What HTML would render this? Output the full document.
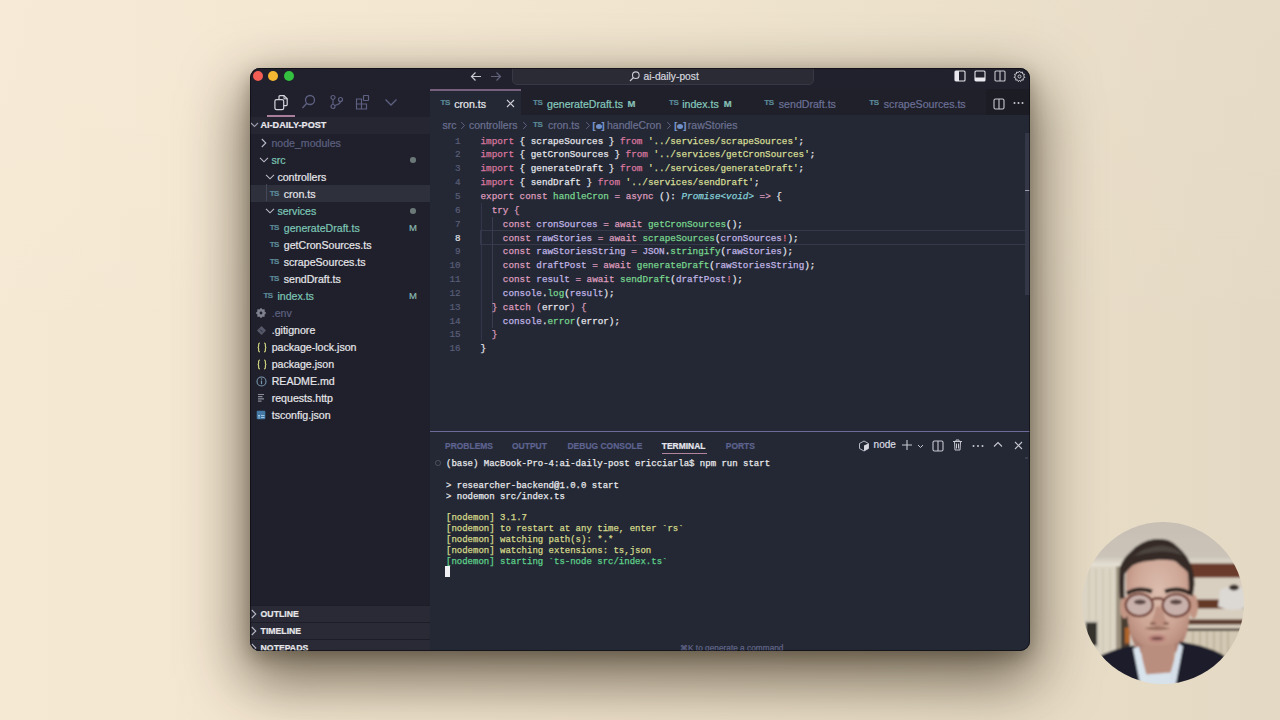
<!DOCTYPE html>
<html><head><meta charset="utf-8">
<style>
*{margin:0;padding:0;box-sizing:border-box}
html,body{width:1280px;height:720px;overflow:hidden}
body{position:relative;font-family:"Liberation Sans",sans-serif;
background:linear-gradient(180deg,rgba(255,250,240,.08) 0%,rgba(255,250,240,0) 50%),linear-gradient(90deg,#f6e9d4 0%,#f2e5cf 35%,#ebdfc8 70%,#e4d9c4 100%);}
.shadow{position:absolute;left:250px;top:68px;width:780px;height:583px;border-radius:10px;
box-shadow:0 24px 60px 7px rgba(35,25,10,.6),0 6px 18px rgba(35,25,10,.3)}
#win{position:absolute;left:250px;top:68px;width:780px;height:583px;border-radius:10px;overflow:hidden;background:#20202c;-webkit-text-stroke:.2px currentColor}
.a{position:absolute;white-space:pre}
.titlebar{position:absolute;left:0;top:0;width:780px;height:21px;background:#21212d}
.tl{position:absolute;width:10px;height:10px;border-radius:50%;top:3.4px}
.sidebar{position:absolute;left:0;top:21px;width:180px;height:562px;background:#20202c}
.editor{position:absolute;left:180px;top:21px;width:600px;height:562px;background:#232834}
.row{position:absolute;height:17px;line-height:17px;font-size:10.6px;white-space:pre}
.ts{position:absolute;font-size:8px;font-weight:700;color:#5c8a99;letter-spacing:-.5px}
.code{position:absolute;font-family:"Liberation Mono",monospace;font-size:9.3px;-webkit-text-stroke:.25px currentColor;line-height:13.84px;white-space:pre;color:#e4e4ea}
.ln{position:absolute;font-family:"Liberation Mono",monospace;font-size:9.25px;line-height:13.84px;white-space:pre;color:#5a5e78;text-align:right}
.k{color:#d9779f}.c{color:#dd9bbd}.v{color:#c0b4e4}.f{color:#79d48f}.s{color:#d6dd96}.t{color:#86cfd8;font-style:italic}.x{color:#e0708e}
.term{position:absolute;font-family:"Liberation Mono",monospace;font-size:9px;-webkit-text-stroke:.25px currentColor;line-height:10.88px;white-space:pre;color:#e8e8ec}
.y{color:#d4d88a}.g{color:#5fd08a}
.sec{position:absolute;left:0;width:180px;height:17px;background:#292a36;border-top:1px solid #1d1d28;font-size:8.7px;font-weight:700;color:#e6e6ea;line-height:16px}
</style></head><body>
<div class="shadow"></div>
<div id="win">
  <div class="titlebar">
    <div class="tl" style="left:2.8px;background:#f25d54"></div>
    <div class="tl" style="left:18.3px;background:#f5b731"></div>
    <div class="tl" style="left:33.9px;background:#33c13f"></div>
  </div>
  <div class="sidebar"></div>
<!--SIDEBAR-->
<!-- selected row bg -->
<div class="a" style="left:0;top:116.55px;width:180px;height:17px;background:#2e303c"></div>
<div class="a" style="left:16.4px;top:116.45px;width:1px;height:17px;background:#454858"></div>
<!-- root header bg -->
<div class="a" style="left:0;top:48.5px;width:180px;height:17px;background:#252631"></div>
<!-- activity icons -->
<svg class="a" style="left:23px;top:26px" width="16" height="17" viewBox="0 0 16 17">
 <path d="M6 5.2V2.6Q6 1.6 7 1.6H11L14.2 4.8V10.6Q14.2 11.6 13.2 11.6H10.8" fill="none" stroke="#d4d4dc" stroke-width="1.2"/>
 <path d="M11 1.6V4.8H14.2" fill="none" stroke="#d4d4dc" stroke-width="1"/>
 <rect x="1.9" y="5.7" width="8.8" height="10" rx="1.6" fill="none" stroke="#d4d4dc" stroke-width="1.2"/>
</svg>
<svg class="a" style="left:51px;top:26px" width="15" height="16" viewBox="0 0 15 16">
 <circle cx="9" cy="6" r="4.5" fill="none" stroke="#5e6082" stroke-width="1.3"/>
 <path d="M5.8 9.3L1.5 14" stroke="#5e6082" stroke-width="1.4"/>
</svg>
<svg class="a" style="left:79px;top:26px" width="15" height="16" viewBox="0 0 15 16">
 <circle cx="4" cy="3.5" r="2" fill="none" stroke="#5e6082" stroke-width="1.2"/>
 <circle cx="4" cy="12.5" r="2" fill="none" stroke="#5e6082" stroke-width="1.2"/>
 <circle cx="11.5" cy="5.5" r="2" fill="none" stroke="#5e6082" stroke-width="1.2"/>
 <path d="M4 5.5V10.5M11.5 7.5Q11.5 10 5.5 11.5" fill="none" stroke="#5e6082" stroke-width="1.2"/>
</svg>
<svg class="a" style="left:105px;top:26px" width="15" height="16" viewBox="0 0 15 16">
 <path d="M1.5 5H6.5V10H11.5V15H1.5Z M1.5 10H6.5V15" fill="none" stroke="#5e6082" stroke-width="1.2"/>
 <rect x="8.5" y="1.5" width="5" height="5" rx=".5" fill="none" stroke="#5e6082" stroke-width="1.2"/>
</svg>
<svg class="a" style="left:134px;top:30px" width="14" height="9" viewBox="0 0 14 9">
 <path d="M1.5 1.5L7 7L12.5 1.5" fill="none" stroke="#5e6082" stroke-width="1.3"/>
</svg>
<div class="a" style="left:17.3px;top:47.3px;width:28.1px;height:1.4px;background:#a97f9c"></div>
<!-- root -->
<svg class="a" style="left:0;top:53px" width="9" height="8" viewBox="0 0 9 8"><path d="M1 2L4.5 5.5L8 2" fill="none" stroke="#9a9cac" stroke-width="1.1"/></svg>
<div class="a" style="left:10.5px;top:51px;font-size:9.1px;font-weight:700;line-height:12px;color:#e8e8ee">AI-DAILY-POST</div>
<svg class="a" style="left:10px;top:70.00px" width="8" height="10" viewBox="0 0 8 10"><path d="M1.8 1L5.8 5L1.8 9" fill="none" stroke="#b8bac8" stroke-width="1.1"/></svg>
<div class="row" style="left:21.4px;top:66.50px;color:#5d6080">node_modules</div>
<svg class="a" style="left:9px;top:88.00px" width="10" height="8" viewBox="0 0 10 8"><path d="M1 1.8L5 5.8L9 1.8" fill="none" stroke="#b8bac8" stroke-width="1.1"/></svg>
<div class="row" style="left:21.4px;top:83.50px;color:#7cc6b6">src</div>
<div class="a" style="left:160px;top:89.00px;width:5.5px;height:5.5px;border-radius:50%;background:#6a7878"></div>
<svg class="a" style="left:15px;top:105.00px" width="10" height="8" viewBox="0 0 10 8"><path d="M1 1.8L5 5.8L9 1.8" fill="none" stroke="#b8bac8" stroke-width="1.1"/></svg>
<div class="row" style="left:27.4px;top:100.50px;color:#e6e6ea">controllers</div>
<div class="ts a" style="left:19.7px;top:120.50px;line-height:10px">TS</div>
<div class="row" style="left:33.75px;top:117.50px;color:#e6e6ea">cron.ts</div>
<svg class="a" style="left:15px;top:139.00px" width="10" height="8" viewBox="0 0 10 8"><path d="M1 1.8L5 5.8L9 1.8" fill="none" stroke="#b8bac8" stroke-width="1.1"/></svg>
<div class="row" style="left:27.4px;top:134.50px;color:#7cc6b6">services</div>
<div class="a" style="left:160px;top:140.00px;width:5.5px;height:5.5px;border-radius:50%;background:#6a7878"></div>
<div class="ts a" style="left:19.7px;top:154.50px;line-height:10px">TS</div>
<div class="row" style="left:33.75px;top:151.50px;color:#7cc6b6">generateDraft.ts</div>
<div class="a" style="left:159px;top:154.00px;font-size:9.5px;line-height:12px;color:#8ab8b0">M</div>
<div class="ts a" style="left:19.7px;top:171.50px;line-height:10px">TS</div>
<div class="row" style="left:33.75px;top:168.50px;color:#e6e6ea">getCronSources.ts</div>
<div class="ts a" style="left:19.7px;top:188.50px;line-height:10px">TS</div>
<div class="row" style="left:33.75px;top:185.50px;color:#e6e6ea">scrapeSources.ts</div>
<div class="ts a" style="left:19.7px;top:205.50px;line-height:10px">TS</div>
<div class="row" style="left:33.75px;top:202.50px;color:#e6e6ea">sendDraft.ts</div>
<div class="ts a" style="left:13.4px;top:222.50px;line-height:10px">TS</div>
<div class="row" style="left:27.4px;top:219.50px;color:#7cc6b6">index.ts</div>
<div class="a" style="left:159px;top:222.00px;font-size:9.5px;line-height:12px;color:#8ab8b0">M</div>
<svg class="a" style="left:5.3px;top:239.00px" width="12" height="12" viewBox="0 0 12 12"><path d="M10.40 6.00L8.96 7.22L9.11 9.11L7.22 8.96L6.00 10.40L4.78 8.96L2.89 9.11L3.04 7.22L1.60 6.00L3.04 4.78L2.89 2.89L4.78 3.04L6.00 1.60L7.22 3.04L9.11 2.89L8.96 4.78Z" fill="#80828f" stroke="#80828f" stroke-width="1.2" stroke-linejoin="round"/><circle cx="6" cy="6" r="1.4" fill="#20202c"/></svg>
<div class="row" style="left:21.7px;top:236.50px;color:#5d6080">.env</div>
<svg class="a" style="left:5.8px;top:256.50px" width="11" height="11" viewBox="0 0 11 11"><path d="M5.5 1L10 5.5L5.5 10L1 5.5Z" fill="#555868"/><path d="M4 4.5L6.5 7" stroke="#2a2a36" stroke-width="1"/></svg>
<div class="row" style="left:21.7px;top:253.50px;color:#e6e6ea">.gitignore</div>
<svg class="a" style="left:6.5px;top:273.50px" width="10" height="11" viewBox="0 0 10 11"><path d="M3 1Q1.6 1 1.6 2.4V4.2Q1.6 5.5 0.6 5.5Q1.6 5.5 1.6 6.8V8.6Q1.6 10 3 10M7 1Q8.4 1 8.4 2.4V4.2Q8.4 5.5 9.4 5.5Q8.4 5.5 8.4 6.8V8.6Q8.4 10 7 10" fill="none" stroke="#cbd07c" stroke-width="1.2"/></svg>
<div class="row" style="left:21.7px;top:270.50px;color:#e6e6ea">package-lock.json</div>
<svg class="a" style="left:6.5px;top:290.50px" width="10" height="11" viewBox="0 0 10 11"><path d="M3 1Q1.6 1 1.6 2.4V4.2Q1.6 5.5 0.6 5.5Q1.6 5.5 1.6 6.8V8.6Q1.6 10 3 10M7 1Q8.4 1 8.4 2.4V4.2Q8.4 5.5 9.4 5.5Q8.4 5.5 8.4 6.8V8.6Q8.4 10 7 10" fill="none" stroke="#cbd07c" stroke-width="1.2"/></svg>
<div class="row" style="left:21.7px;top:287.50px;color:#e6e6ea">package.json</div>
<svg class="a" style="left:5.8px;top:307.50px" width="11" height="11" viewBox="0 0 11 11"><circle cx="5.5" cy="5.5" r="4.5" fill="none" stroke="#7896ae" stroke-width="1.1"/><path d="M5.5 4.6V8.2" stroke="#7896ae" stroke-width="1.2"/><circle cx="5.5" cy="3.1" r=".75" fill="#7896ae"/></svg>
<div class="row" style="left:21.7px;top:304.50px;color:#e6e6ea">README.md</div>
<svg class="a" style="left:6.3px;top:325.00px" width="10" height="10" viewBox="0 0 10 10"><path d="M2 1.5H8M2 3.7H6.5M2 5.9H8M2 8.1H5.5" stroke="#8a8c9a" stroke-width="1.2"/></svg>
<div class="row" style="left:21.7px;top:321.50px;color:#e6e6ea">requests.http</div>
<svg class="a" style="left:6.3px;top:342.00px" width="10" height="10" viewBox="0 0 10 10"><rect x=".7" y=".7" width="8.6" height="8.6" rx="1" fill="#4479a6"/><path d="M5 5.5H8.5M5 7.5H8.5M2 5.5H4M3 5.5V8.5" stroke="#a8cce4" stroke-width=".9"/></svg>
<div class="row" style="left:21.7px;top:338.50px;color:#e6e6ea">tsconfig.json</div><div class="sec" style="top:537.2px"><svg class="a" style="left:0;top:3px" width="8" height="10" viewBox="0 0 8 10"><path d="M1.8 1L5.8 5L1.8 9" fill="none" stroke="#b8bac8" stroke-width="1.1"/></svg><span class="a" style="left:10.6px;top:0">OUTLINE</span></div>
<div class="sec" style="top:554.2px"><svg class="a" style="left:0;top:3px" width="8" height="10" viewBox="0 0 8 10"><path d="M1.8 1L5.8 5L1.8 9" fill="none" stroke="#b8bac8" stroke-width="1.1"/></svg><span class="a" style="left:10.6px;top:0">TIMELINE</span></div>
<div class="sec" style="top:571.2px"><svg class="a" style="left:0;top:3px" width="8" height="10" viewBox="0 0 8 10"><path d="M1.8 1L5.8 5L1.8 9" fill="none" stroke="#b8bac8" stroke-width="1.1"/></svg><span class="a" style="left:10.6px;top:0">NOTEPADS</span></div>

<!--/SIDEBAR-->
  <div class="editor"></div>
<!--EDITOR-->
<div class="a" style="left:180px;top:21px;width:600px;height:26px;background:#20202b"></div>
<div class="a" style="left:736px;top:21px;width:44px;height:26px;background:#1c1c25"></div>
<div class="a" style="left:180px;top:21px;width:91.4px;height:26px;background:#242834"></div>
<div class="a" style="left:180px;top:21.4px;width:91.4px;height:1.3px;background:#76607e"></div>
<div class="ts a" style="left:190.6px;top:30.25px;line-height:10px">TS</div>
<div class="a" style="left:204.2px;top:28.75px;font-size:10.6px;line-height:14px;color:#e8e8ee">cron.ts</div>
<div class="ts a" style="left:283px;top:30.25px;line-height:10px">TS</div>
<div class="a" style="left:297px;top:28.75px;font-size:10.6px;line-height:14px;color:#86c9bd">generateDraft.ts</div>
<div class="a" style="left:377.5px;top:29.75px;font-size:9.5px;line-height:12px;font-weight:700;color:#86c0b6">M</div>
<div class="ts a" style="left:419px;top:30.25px;line-height:10px">TS</div>
<div class="a" style="left:432.2px;top:28.75px;font-size:10.6px;line-height:14px;color:#86c9bd">index.ts</div>
<div class="a" style="left:473.7px;top:29.75px;font-size:9.5px;line-height:12px;font-weight:700;color:#86c0b6">M</div>
<div class="ts a" style="left:514.3px;top:30.25px;line-height:10px">TS</div>
<div class="a" style="left:528.8px;top:28.75px;font-size:10.6px;line-height:14px;color:#6b7196">sendDraft.ts</div>
<div class="ts a" style="left:619.3px;top:30.25px;line-height:10px">TS</div>
<div class="a" style="left:633.8px;top:28.75px;font-size:10.6px;line-height:14px;color:#6b7196">scrapeSources.ts</div>
<svg class="a" style="left:256px;top:31.3px" width="9" height="9" viewBox="0 0 9 9"><path d="M1 1L8 8M8 1L1 8" stroke="#d0d0d8" stroke-width="1.1"/></svg>
<svg class="a" style="left:742.5px;top:29.5px" width="12" height="12" viewBox="0 0 12 12"><rect x="1" y="1" width="10" height="10" rx="1.5" fill="none" stroke="#c8c8d0" stroke-width="1.1"/><path d="M6 1V11" stroke="#c8c8d0" stroke-width="1.1"/></svg>
<svg class="a" style="left:762.5px;top:33px" width="11" height="4" viewBox="0 0 11 4"><circle cx="1.5" cy="2" r="1" fill="#c8c8d0"/><circle cx="5.5" cy="2" r="1" fill="#c8c8d0"/><circle cx="9.5" cy="2" r="1" fill="#c8c8d0"/></svg>
<div class="a" style="left:192.6px;top:50px;font-size:10.5px;line-height:14px;color:#6c7092">src</div>
<svg class="a" style="left:209.5px;top:52.5px" width="6" height="9" viewBox="0 0 6 9"><path d="M1.2 1L4.5 4.5L1.2 8" fill="none" stroke="#5c6080" stroke-width="1"/></svg>
<div class="a" style="left:219px;top:50px;font-size:10.5px;line-height:14px;color:#6c7092">controllers</div>
<svg class="a" style="left:272.0px;top:52.5px" width="6" height="9" viewBox="0 0 6 9"><path d="M1.2 1L4.5 4.5L1.2 8" fill="none" stroke="#5c6080" stroke-width="1"/></svg>
<div class="ts a" style="left:283px;top:52.1px;line-height:10px">TS</div>
<div class="a" style="left:298px;top:50px;font-size:10.5px;line-height:14px;color:#6c7092">cron.ts</div>
<svg class="a" style="left:334.5px;top:52.5px" width="6" height="9" viewBox="0 0 6 9"><path d="M1.2 1L4.5 4.5L1.2 8" fill="none" stroke="#5c6080" stroke-width="1"/></svg>
<div class="a" style="left:342.5px;top:51.6px;font-size:9px;line-height:12px;color:#7f9ad0;font-weight:700">[<span style="display:inline-block;width:6px;height:5px;border-radius:50%;background:#7090c8;vertical-align:0px"></span>]</div>
<div class="a" style="left:357px;top:50px;font-size:10.5px;line-height:14px;color:#6c7092">handleCron</div>
<svg class="a" style="left:416.0px;top:52.5px" width="6" height="9" viewBox="0 0 6 9"><path d="M1.2 1L4.5 4.5L1.2 8" fill="none" stroke="#5c6080" stroke-width="1"/></svg>
<div class="a" style="left:424.2px;top:51.6px;font-size:9px;line-height:12px;color:#7f9ad0;font-weight:700">[<span style="display:inline-block;width:6px;height:5px;border-radius:50%;background:#7090c8;vertical-align:0px"></span>]</div>
<div class="a" style="left:437.8px;top:50px;font-size:10.5px;line-height:14px;color:#6c7092">rawStories</div>
<div class="a" style="left:230px;top:162.26px;width:546px;height:14.44px;border:1px solid #363949;border-right:none"></div>
<div class="a" style="left:231px;top:135.08px;width:1px;height:138.40px;background:#33364a"></div>
<div class="a" style="left:242.2px;top:148.92px;width:1px;height:110.72px;background:#3a3d52"></div>
<div class="ln" style="left:180px;top:66.6px;width:30.6px"><span style="color:#5a5e78">1</span>
<span style="color:#5a5e78">2</span>
<span style="color:#5a5e78">3</span>
<span style="color:#5a5e78">4</span>
<span style="color:#5a5e78">5</span>
<span style="color:#5a5e78">6</span>
<span style="color:#5a5e78">7</span>
<span style="color:#e0e0e8">8</span>
<span style="color:#5a5e78">9</span>
<span style="color:#5a5e78">10</span>
<span style="color:#5a5e78">11</span>
<span style="color:#5a5e78">12</span>
<span style="color:#5a5e78">13</span>
<span style="color:#5a5e78">14</span>
<span style="color:#5a5e78">15</span>
<span style="color:#5a5e78">16</span></div>
<div class="code" style="left:230.5px;top:66.6px"><span class="k">import</span> { scrapeSources } <span class="k">from</span> <span class="s">'../services/scrapeSources'</span>;
<span class="k">import</span> { getCronSources } <span class="k">from</span> <span class="s">'../services/getCronSources'</span>;
<span class="k">import</span> { generateDraft } <span class="k">from</span> <span class="s">'../services/generateDraft'</span>;
<span class="k">import</span> { sendDraft } <span class="k">from</span> <span class="s">'../services/sendDraft'</span>;
<span class="c">export</span> <span class="c">const</span> <span class="f">handleCron</span> <span class="c">=</span> <span class="c">async</span> (): <span class="t">Promise&lt;void&gt;</span> <span class="c">=&gt;</span> {
  <span class="c">try {</span>
    <span class="c">const</span> <span class="v">cronSources</span> <span class="c">=</span> <span class="c">await</span> <span class="f">getCronSources</span>();
    <span class="c">const</span> <span class="v">rawStories</span> <span class="c">=</span> <span class="c">await</span> <span class="f">scrapeSources</span>(<span class="v">cronSources</span><span class="x">!</span>);
    <span class="c">const</span> <span class="v">rawStoriesString</span> <span class="c">=</span> <span class="v">JSON</span>.<span class="f">stringify</span>(<span class="v">rawStories</span>);
    <span class="c">const</span> <span class="v">draftPost</span> <span class="c">=</span> <span class="c">await</span> <span class="f">generateDraft</span>(<span class="v">rawStoriesString</span>);
    <span class="c">const</span> <span class="v">result</span> <span class="c">=</span> <span class="c">await</span> <span class="f">sendDraft</span>(<span class="v">draftPost</span><span class="x">!</span>);
    <span class="v">console</span>.<span class="f">log</span>(<span class="v">result</span>);
  <span class="c">}</span> <span class="c">catch</span> <span class="c">(</span>error<span class="c">)</span> <span class="c">{</span>
    <span class="v">console</span>.<span class="f">error</span>(error);
  <span class="c">}</span>
}</div>
<div class="a" style="left:775px;top:65px;width:4.5px;height:162px;background:#343746"></div>
<div class="a" style="left:775px;top:121.5px;width:4.5px;height:1.2px;background:#9a9cab"></div>
<!--/EDITOR-->
<!--TITLE-->
<svg class="a" style="left:219.5px;top:3px" width="12" height="11" viewBox="0 0 12 11"><path d="M11 5.5H1.5M5.5 1.5L1.5 5.5L5.5 9.5" fill="none" stroke="#c9c9d2" stroke-width="1.2"/></svg>
<svg class="a" style="left:240px;top:3px" width="12" height="11" viewBox="0 0 12 11"><path d="M1 5.5H10.5M6.5 1.5L10.5 5.5L6.5 9.5" fill="none" stroke="#5f6178" stroke-width="1.2"/></svg>
<div class="a" style="left:262.4px;top:-3px;width:302px;height:20px;border-radius:5px;border:1px solid #383845;background:#2b2b36"></div>
<svg class="a" style="left:379px;top:3px" width="11" height="11" viewBox="0 0 11 11"><circle cx="6.8" cy="4.2" r="3.3" fill="none" stroke="#c9c9d2" stroke-width="1.1"/><path d="M4.4 6.6L1 10" stroke="#c9c9d2" stroke-width="1.2"/></svg>
<div class="a" style="left:393.5px;top:1.6px;font-size:10.26px;line-height:14px;color:#d6d6de">ai-daily-post</div>
<svg class="a" style="left:703.5px;top:1.8px" width="12" height="12" viewBox="0 0 12 12"><rect x="1" y="1" width="10" height="10" rx="1" fill="none" stroke="#e8e8ee" stroke-width="1.1"/><rect x="1" y="1" width="4" height="10" fill="#e8e8ee"/></svg>
<svg class="a" style="left:723.5px;top:1.8px" width="12" height="12" viewBox="0 0 12 12"><rect x="1" y="1" width="10" height="10" rx="1" fill="none" stroke="#e8e8ee" stroke-width="1.1"/><rect x="1" y="7.5" width="10" height="3.5" fill="#e8e8ee"/></svg>
<svg class="a" style="left:743.5px;top:1.8px" width="12" height="12" viewBox="0 0 12 12"><rect x="1" y="1" width="10" height="10" rx="1" fill="none" stroke="#c8c8d0" stroke-width="1.1"/><path d="M6 1V11" stroke="#c8c8d0" stroke-width="1.1"/></svg>
<svg class="a" style="left:763px;top:1.5px" width="13" height="13" viewBox="0 0 13 13"><path d="M6.5 1L7.6 2.6L9.4 2L9.6 3.9L11.5 4.3L10.6 6L11.9 7.4L10.1 8.2L10.3 10.1L8.4 9.9L7.6 11.6L6.5 10.3L5.4 11.6L4.6 9.9L2.7 10.1L2.9 8.2L1.1 7.4L2.4 6L1.5 4.3L3.4 3.9L3.6 2L5.4 2.6Z" fill="none" stroke="#c8c8d0" stroke-width="1"/><circle cx="6.5" cy="6.5" r="1.5" fill="none" stroke="#c8c8d0" stroke-width="1"/></svg>
<!--/TITLE-->
<!--PANEL-->
<div class="a" style="left:180px;top:362.6px;width:600px;height:1.3px;background:#6f6b98"></div>
<div class="a" style="left:195px;top:372.1px;font-size:8.47px;font-weight:700;line-height:12px;color:#5e6390">PROBLEMS</div>
<div class="a" style="left:262px;top:372.1px;font-size:8.47px;font-weight:700;line-height:12px;color:#5e6390">OUTPUT</div>
<div class="a" style="left:317.5px;top:372.1px;font-size:8.47px;font-weight:700;line-height:12px;color:#5e6390">DEBUG CONSOLE</div>
<div class="a" style="left:411.75px;top:372.1px;font-size:8.47px;font-weight:700;line-height:12px;color:#e6e6ee">TERMINAL</div>
<div class="a" style="left:475.75px;top:372.1px;font-size:8.47px;font-weight:700;line-height:12px;color:#5e6390">PORTS</div>
<div class="a" style="left:411.5px;top:385.2px;width:45px;height:1.2px;background:#b2849e"></div>
<svg class="a" style="left:608px;top:371.5px" width="12" height="12" viewBox="0 0 12 12"><path d="M6 1L10.5 3.5V8.5L6 11L1.5 8.5V3.5Z" fill="none" stroke="#b8b8c4" stroke-width="1"/><path d="M6 5.5L10.5 3.5V8.5L6 11Z" fill="#d8d8e0"/></svg>
<div class="a" style="left:623.6px;top:370.3px;font-size:10px;line-height:14px;color:#dcdce4">node</div>
<svg class="a" style="left:651px;top:371px" width="12" height="12" viewBox="0 0 12 12"><path d="M6 1V11M1 6H11" stroke="#c8c8d0" stroke-width="1.1"/></svg>
<svg class="a" style="left:666.5px;top:375.5px" width="7" height="5" viewBox="0 0 7 5"><path d="M1 1L3.5 3.5L6 1" fill="none" stroke="#c8c8d0" stroke-width="1"/></svg>
<svg class="a" style="left:682px;top:371.5px" width="12" height="12" viewBox="0 0 12 12"><rect x="1" y="1" width="10" height="10" rx="1.5" fill="none" stroke="#c8c8d0" stroke-width="1.1"/><path d="M6 1V11" stroke="#c8c8d0" stroke-width="1.1"/></svg>
<svg class="a" style="left:702px;top:371px" width="11" height="12" viewBox="0 0 11 12"><path d="M1 2.5H10M4 2.5V1H7V2.5M2.5 2.5L3 11H8L8.5 2.5M4.5 4.5V9.5M6.5 4.5V9.5" fill="none" stroke="#c8c8d0" stroke-width="1"/></svg>
<svg class="a" style="left:722px;top:375.5px" width="12" height="4" viewBox="0 0 12 4"><circle cx="1.5" cy="2" r="1" fill="#c8c8d0"/><circle cx="6" cy="2" r="1" fill="#c8c8d0"/><circle cx="10.5" cy="2" r="1" fill="#c8c8d0"/></svg>
<svg class="a" style="left:743px;top:373px" width="10" height="7" viewBox="0 0 10 7"><path d="M1 5.5L5 1.5L9 5.5" fill="none" stroke="#c8c8d0" stroke-width="1.1"/></svg>
<svg class="a" style="left:763.5px;top:372.5px" width="9" height="9" viewBox="0 0 9 9"><path d="M1 1L8 8M8 1L1 8" stroke="#c8c8d0" stroke-width="1.1"/></svg>
<div class="a" style="left:185.2px;top:392.30px;width:5.6px;height:5.6px;border-radius:50%;border:1.2px solid #4f5262"></div>
<div class="term" style="left:196px;top:390.9px">(base) MacBook-Pro-4:ai-daily-post ericciarla$ npm run start

&gt; researcher-backend@1.0.0 start
&gt; nodemon src/index.ts

<span class="y">[nodemon] 3.1.7</span>
<span class="y">[nodemon] to restart at any time, enter `rs`</span>
<span class="y">[nodemon] watching path(s): *.*</span>
<span class="y">[nodemon] watching extensions: ts,json</span>
<span class="g">[nodemon] starting `ts-node src/index.ts`</span></div>
<div class="a" style="left:195.2px;top:498.3px;width:5.3px;height:10.8px;background:#f0f0f4"></div>
<div class="a" style="left:430px;top:574px;font-size:8.3px;line-height:12px;color:#62668a">⌘K to generate a command</div>
<div class="a" style="left:775px;top:389px;width:3px;height:2px;background:#3a3d4d"></div>
<!--/PANEL-->
</div>
<div class="a" style="left:250px;top:68px;width:780px;height:583px;border-radius:10px;border:1px solid rgba(10,8,12,.6);pointer-events:none"></div>
<!--WEBCAM-->
<svg class="a" style="left:1082px;top:521.5px" width="162" height="162" viewBox="0 0 162 162">
<defs>
 <clipPath id="cc"><circle cx="81" cy="81" r="81"/></clipPath>
 <filter id="bl" x="-10%" y="-10%" width="120%" height="120%"><feGaussianBlur stdDeviation="1"/></filter>
 <radialGradient id="skin" cx="0.5" cy="0.35" r="0.65"><stop offset="0" stop-color="#dcbdae"/><stop offset="0.6" stop-color="#cda595"/><stop offset="1" stop-color="#b08272"/></radialGradient>
 <linearGradient id="ceil" x1="0" y1="0" x2="0" y2="1"><stop offset="0" stop-color="#c7bfb4"/><stop offset="1" stop-color="#d9d2c7"/></linearGradient>
</defs>
<g clip-path="url(#cc)">
<g filter="url(#bl)" transform="translate(1,0.5)">
 <rect x="-5" y="-5" width="172" height="172" fill="url(#ceil)"/>
 <rect x="-5" y="36" width="172" height="8" fill="#d8d1c5"/>
 <!-- left wall -->
 <rect x="-5" y="42" width="44" height="98" fill="#dbd4c4"/>
 <rect x="-5" y="40" width="44" height="4" fill="#e4ded2"/>
 <path d="M6 46V135M13 46V135M20 46V135M27 46V135" stroke="#c9bfac" stroke-width="1"/>
 <rect x="33" y="44" width="8" height="92" fill="#9c917f"/>
 <!-- picture frame -->
 <rect x="1" y="98" width="15" height="27" fill="#cec7ba"/>
 <rect x="3" y="100" width="11" height="23" fill="#36332f"/>
 <!-- right ceiling / beams -->
 <rect x="104" y="40" width="62" height="100" fill="#d8cfc0"/>
 <rect x="107" y="41" width="62" height="14" fill="#6a3a2a"/>
 <rect x="110" y="77" width="60" height="9" fill="#643828"/>
 <rect x="104" y="97" width="62" height="5" fill="#5b3b2d"/>
 <!-- lamp -->
 <path d="M137 67Q150 61 164 67L166 84Q150 91 135 84Z" fill="#dcd8d3"/>
 <ellipse cx="151" cy="65" rx="5" ry="3" fill="#3a332e"/>
 <!-- curtain -->
 <rect x="103" y="106" width="55" height="2.5" fill="#4a3d33"/>
 <rect x="103" y="108.5" width="55" height="32" fill="#d3c8b3"/>
 <path d="M110 109V140M117 109V140M124 109V140M131 109V140M138 109V140M145 109V140" stroke="#bcb09b" stroke-width="1.5"/>
 <!-- dark area left of head -->
 <rect x="38" y="92" width="9" height="45" fill="#4a3c32"/>
 <rect x="42" y="105" width="5" height="16" fill="#b0652a"/>
 <!-- ears -->
 <ellipse cx="41.5" cy="85" rx="4.5" ry="11" fill="#c29584"/>
 <ellipse cx="110.5" cy="84" rx="4.5" ry="12" fill="#c29584"/>
 <!-- face -->
 <path d="M43 56Q43 33 74 32Q106 33 108 56L107 88Q106 110 99 123Q90 136 73 137Q59 135 52 124Q45 110 44 90Z" fill="url(#skin)"/>
 <!-- hair -->
 <path d="M36.7 76Q35.5 58 36.7 45Q40 36 46.4 30.4Q52 24 59 20.6Q65 17 70.7 16.7Q78 16 85.3 17.7Q91 20 95 24.5Q100 29 103.8 34.2Q107.5 40 109.6 46.9Q111.5 54 111.5 61.5Q111 67 109.6 74L105.7 72Q106 58 104.7 49.8Q101 46 97 43Q94 39 90.2 38.1Q83 37 75.6 37.2Q68 38 61 39.1Q54 40.5 49.4 43Q45 47 41.6 51.7Q41 62 41.5 76Z" fill="#342c28"/>
 <path d="M50 34Q62 24 80 23Q94 25 100 33Q90 29 78 29Q62 30 50 34Z" fill="#4e4540"/>
 <!-- stubble -->
 <path d="M47 108Q54 134 73 137Q93 134 103 108Q96 125 74 128Q54 125 47 108Z" fill="#a47a6b" opacity="0.75"/>
 <path d="M61 106Q74 101 88 106Q74 110 61 106Z" fill="#9c7364"/>
 <!-- eyebrows -->
 <path d="M44 71Q55 64 69 69" stroke="#2b221f" stroke-width="4" fill="none"/>
 <path d="M82 69Q96 64 107 71" stroke="#2b221f" stroke-width="4" fill="none"/>
 <!-- lenses -->
 <ellipse cx="56.3" cy="82.5" rx="13.5" ry="11.2" fill="#c9b1ab"/>
 <ellipse cx="93.2" cy="82.8" rx="13.5" ry="11.2" fill="#c9b1ab"/>
 <ellipse cx="57" cy="79.5" rx="6" ry="2.6" fill="#5a4443"/>
 <ellipse cx="93" cy="79.5" rx="6" ry="2.6" fill="#5a4443"/>
 <ellipse cx="56.3" cy="82.5" rx="13.5" ry="11.2" fill="none" stroke="#6a372c" stroke-width="2.3"/>
 <ellipse cx="93.2" cy="82.8" rx="13.5" ry="11.2" fill="none" stroke="#6a372c" stroke-width="2.3"/>
 <path d="M69 77Q75 74.5 80.5 77" stroke="#6a372c" stroke-width="2.3" fill="none"/>
 <!-- nose -->
 <path d="M73 84Q71 96 67 101Q76 106 85 101Q81 96 79 84Z" fill="#b98b7b" opacity="0.8"/>
 <ellipse cx="70" cy="101" rx="3" ry="1.6" fill="#8e6356"/>
 <ellipse cx="83" cy="101" rx="3" ry="1.6" fill="#8e6356"/>
 <!-- mouth -->
 <ellipse cx="74" cy="116" rx="9" ry="4.2" fill="#bb857d"/>
 <ellipse cx="74" cy="116" rx="6" ry="1.4" fill="#6e4440"/>
 <!-- neck -->
 <path d="M58 124L92 122L90 165L62 165Z" fill="#b98e7e"/>
 <!-- jacket -->
 <path d="M-5 170L12 136Q30 126 50 123L56 127L66 166L-5 170Z" fill="#1a1d29"/>
 <path d="M167 170L150 140Q138 128 112 122L97 119L88 166Z" fill="#1a1d29"/>
 <!-- collar -->
 <path d="M50 126L56 124L67 166L58 166Z" fill="#d9e3ec"/>
 <path d="M96 121L100 124L92 166L83 166Z" fill="#d5dfe9"/>
 <path d="M62 152L88 150L86 166L64 166Z" fill="#d8e2eb"/>
</g>
</g>
</svg>

<!--/WEBCAM-->
</body></html>
